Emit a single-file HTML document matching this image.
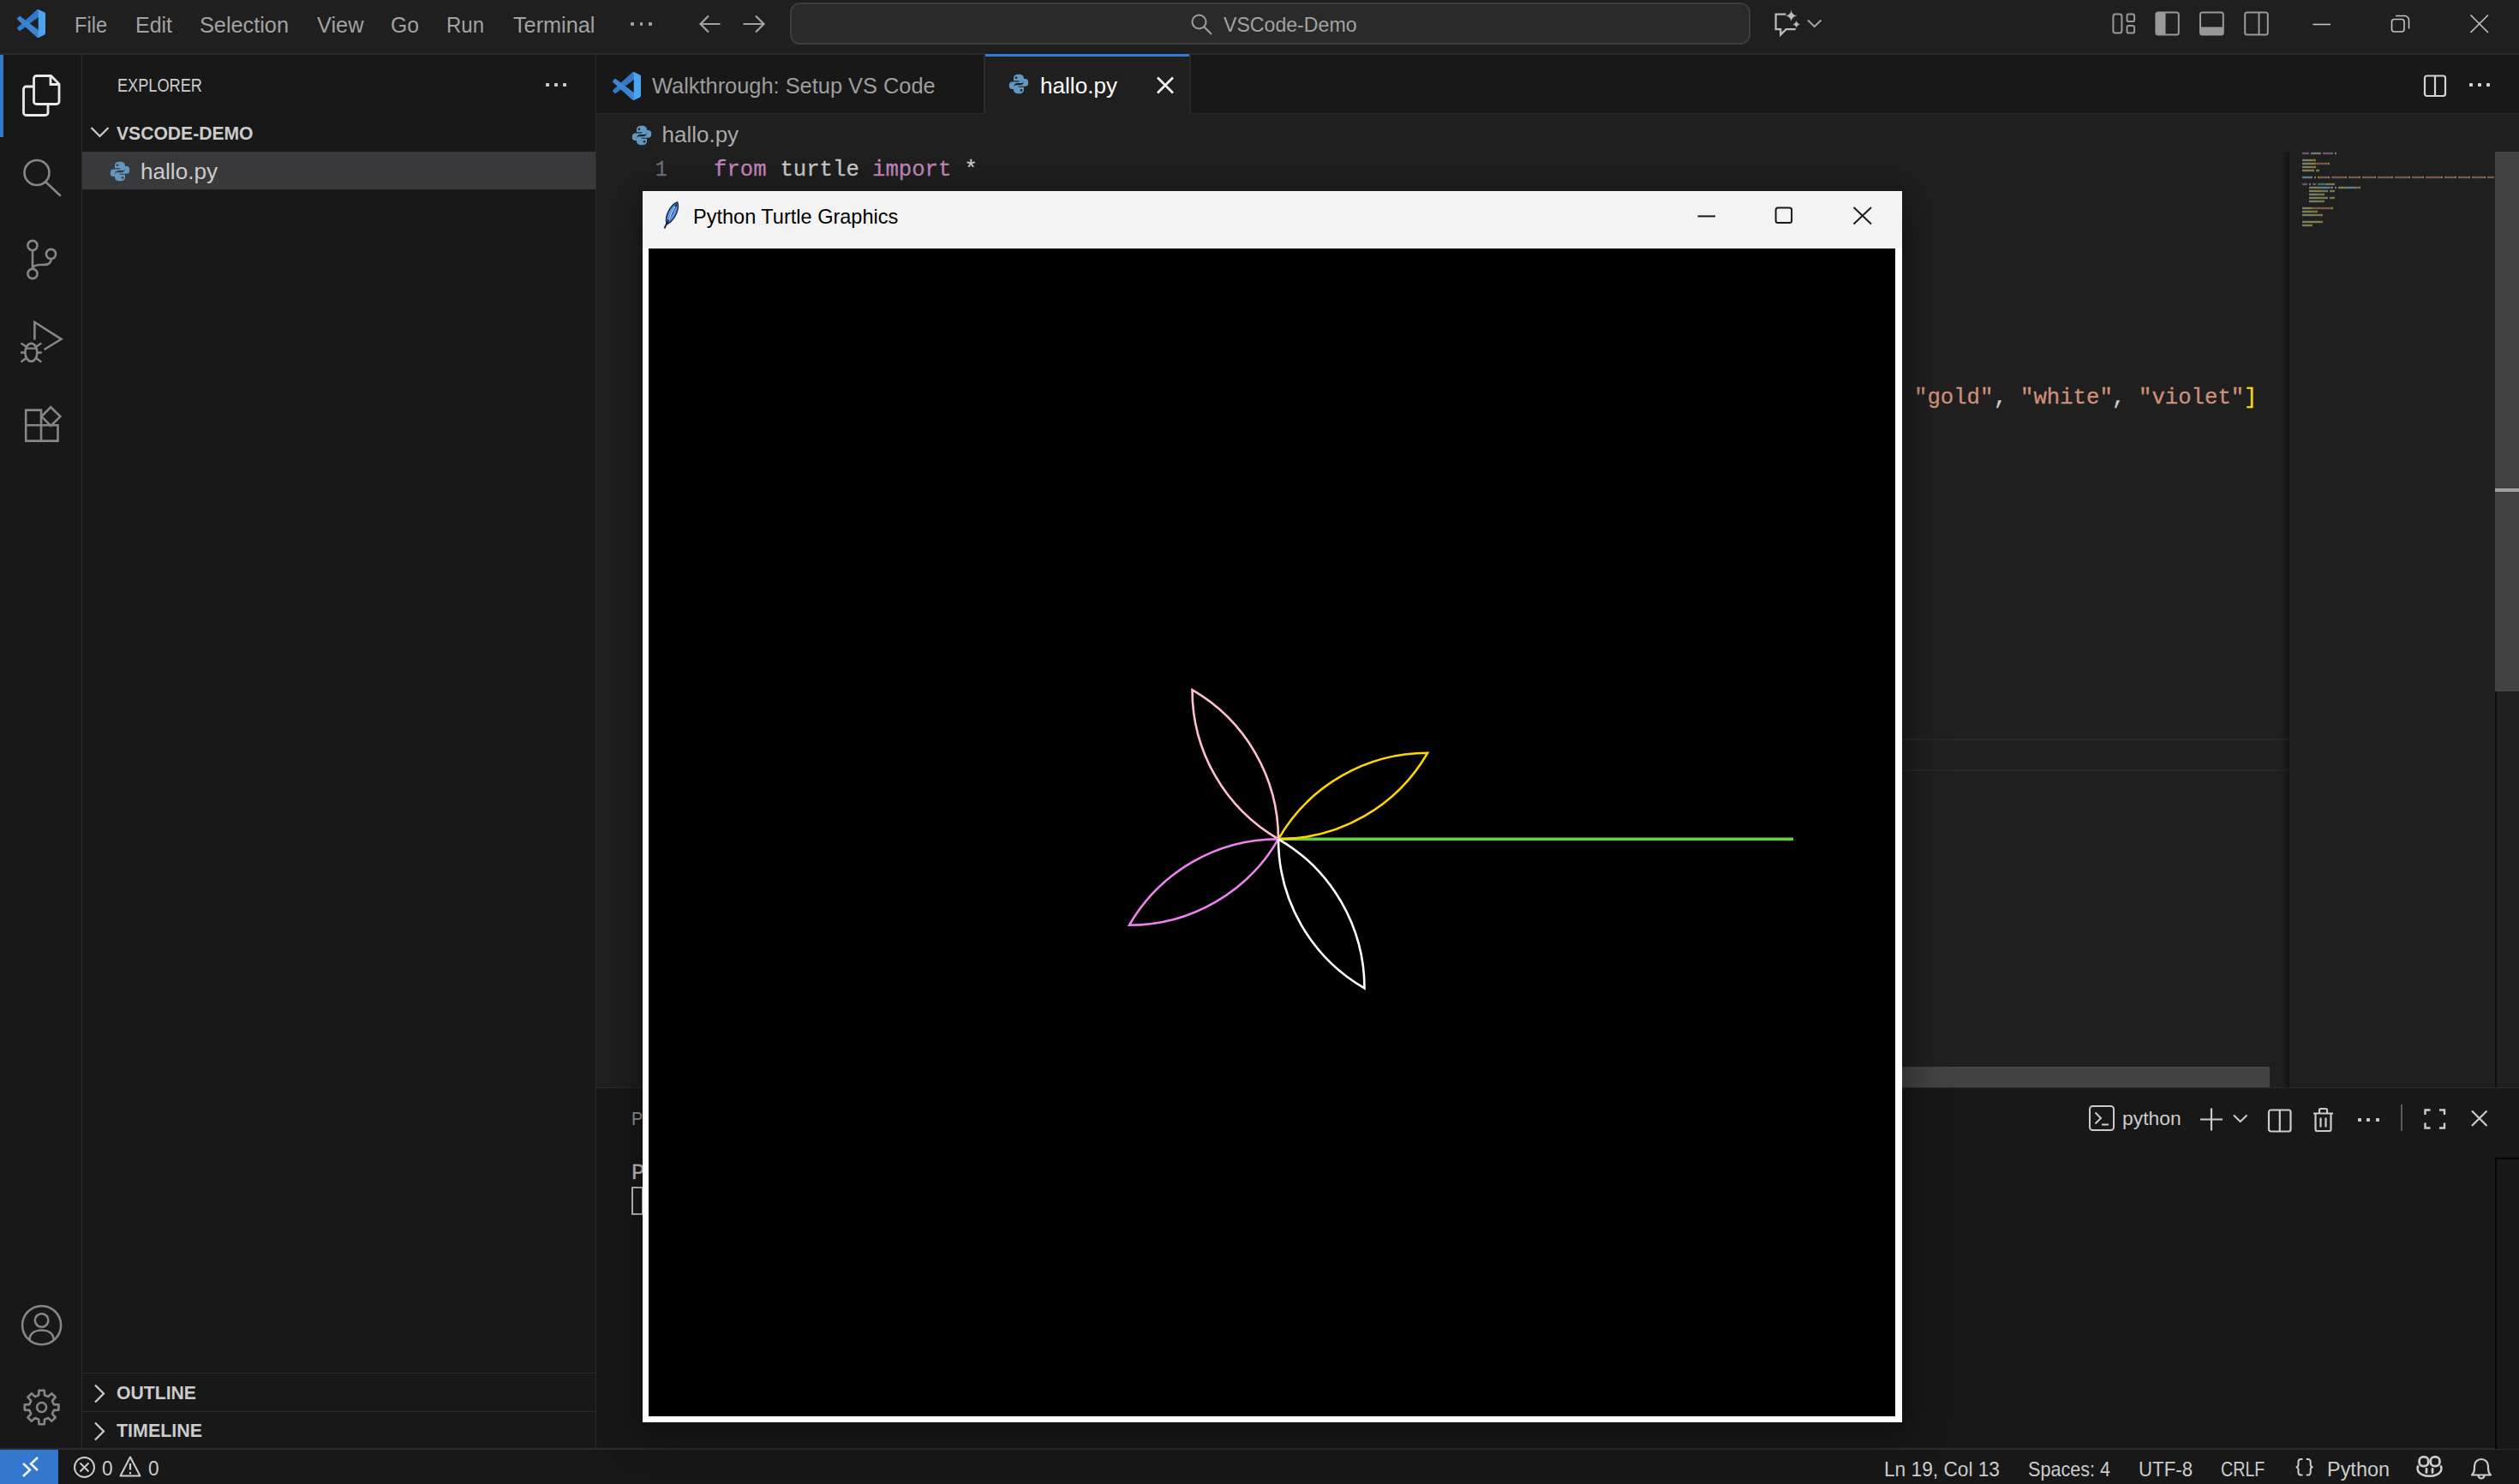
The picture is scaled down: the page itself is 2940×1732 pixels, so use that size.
<!DOCTYPE html>
<html lang="en"><head><meta charset="utf-8"><title>hallo.py - VSCode-Demo - Visual Studio Code</title>
<style>
html,body{margin:0;padding:0;background:#181818;}
body{width:2940px;height:1732px;position:relative;overflow:hidden;font-family:"Liberation Sans",sans-serif;}
.t{position:absolute;white-space:pre;line-height:1;transform-origin:0 50%;}
.s{font-family:"Liberation Sans",sans-serif;}
.m{font-family:"Liberation Mono",monospace;-webkit-text-stroke:0.3px currentColor;}
</style></head><body>
<div style="position:absolute;left:0px;top:0px;width:2940px;height:62px;background:#1f1f1f;"></div>
<div style="position:absolute;left:0px;top:63px;width:95px;height:1628px;background:#181818;"></div>
<div style="position:absolute;left:95px;top:63px;width:1px;height:1628px;background:#2b2b2b;"></div>
<div style="position:absolute;left:0px;top:64px;width:4px;height:96px;background:#3579c8;"></div>
<div style="position:absolute;left:96px;top:63px;width:599px;height:1628px;background:#181818;"></div>
<div style="position:absolute;left:695px;top:63px;width:1px;height:1628px;background:#2b2b2b;"></div>
<div style="position:absolute;left:696px;top:63px;width:2244px;height:69px;background:#181818;"></div>
<div style="position:absolute;left:0px;top:61.5px;width:2940px;height:2px;background:#2b2b2b;"></div>
<div style="position:absolute;left:696px;top:131.7px;width:2244px;height:1.6px;background:#2b2b2b;"></div>
<div style="position:absolute;left:1148px;top:63px;width:1.8px;height:70px;background:#2b2b2b;"></div>
<div style="position:absolute;left:1149.8px;top:61px;width:238.4px;height:72px;background:#1f1f1f;"></div>
<div style="position:absolute;left:1149.8px;top:63.3px;width:238.4px;height:2.4px;background:#2f7bd8;"></div>
<div style="position:absolute;left:1388.2px;top:63px;width:1.8px;height:70px;background:#2b2b2b;"></div>
<div style="position:absolute;left:696px;top:133px;width:2244px;height:1137px;background:#1f1f1f;"></div>
<div style="position:absolute;left:696px;top:1269px;width:2244px;height:1px;background:#2b2b2b;"></div>
<div style="position:absolute;left:696px;top:1270px;width:2244px;height:421px;background:#181818;"></div>
<div style="position:absolute;left:0px;top:1691px;width:2940px;height:41px;background:#181818;"></div>
<div style="position:absolute;left:0px;top:1690.3px;width:2940px;height:1.7px;background:#2b2b2b;"></div>
<div style="position:absolute;left:0px;top:1692px;width:68.4px;height:40px;background:#3477cf;"></div>
<div style="position:absolute;left:96px;top:177px;width:599px;height:44px;background:#39393b;"></div>
<div style="position:absolute;left:96px;top:1602px;width:599px;height:1px;background:#2b2b2b;"></div>
<div style="position:absolute;left:96px;top:1647px;width:599px;height:1px;background:#2b2b2b;"></div>
<div style="position:absolute;left:820px;top:862px;width:1851px;height:2px;background:#282828;"></div>
<div style="position:absolute;left:820px;top:898px;width:1851px;height:2px;background:#282828;"></div>
<div style="position:absolute;left:2911.5px;top:177px;width:2px;height:1092px;background:#0e0e12;"></div>
<div style="position:absolute;left:2911.5px;top:177px;width:28.5px;height:630px;background:#424242;"></div>
<div style="position:absolute;left:2911.5px;top:570px;width:28.5px;height:4px;background:#a0a0a0;"></div>
<div style="position:absolute;left:1500px;top:1245px;width:1149px;height:24px;background:#434343;"></div>
<div style="position:absolute;left:2661px;top:177px;width:10.5px;height:1093px;background:linear-gradient(90deg,rgba(0,0,0,0),rgba(0,0,0,0.35))"></div>
<svg style="position:absolute;left:20px;top:11px;" width="33" height="33" viewBox="0 0 100 100"><path d="M96.4614 10.7962L75.8569 0.875542C73.4719 -0.272773 70.6217 0.211611 68.75 2.08333L1.29858 63.5832C-0.515693 65.2373 -0.513607 68.0937 1.30308 69.7452L6.81272 74.7541C8.29793 76.1042 10.5347 76.2036 12.1338 74.9905L93.3609 13.3699C96.086 11.3026 100 13.2462 100 16.6667V16.4275C100 14.0265 98.6246 11.8378 96.4614 10.7962Z" fill="#3577c4"/><path d="M96.4614 89.2038L75.8569 99.1245C73.4719 100.273 70.6217 99.7884 68.75 97.9167L1.29858 36.4169C-0.515693 34.7627 -0.513607 31.9063 1.30308 30.2548L6.81272 25.2459C8.29793 23.8958 10.5347 23.7964 12.1338 25.0095L93.3609 86.6301C96.086 88.6974 100 86.7538 100 83.3334V83.5726C100 85.9735 98.6246 88.1622 96.4614 89.2038Z" fill="#3b84d4"/><path d="M75.8578 99.1263C73.4721 100.274 70.6219 99.7885 68.75 97.9166C71.0564 100.223 75 98.5895 75 95.3278V4.67213C75 1.41039 71.0564 -0.223106 68.75 2.08329C70.6219 0.211402 73.4721 -0.273666 75.8578 0.873633L96.4587 10.7807C98.6234 11.8217 100 14.0112 100 16.4132V83.5871C100 85.9891 98.6234 88.1786 96.4586 89.2196L75.8578 99.1263Z" fill="#4ca3f0"/></svg>
<svg style="position:absolute;left:715px;top:83.5px;" width="33" height="33" viewBox="0 0 100 100"><path d="M96.4614 10.7962L75.8569 0.875542C73.4719 -0.272773 70.6217 0.211611 68.75 2.08333L1.29858 63.5832C-0.515693 65.2373 -0.513607 68.0937 1.30308 69.7452L6.81272 74.7541C8.29793 76.1042 10.5347 76.2036 12.1338 74.9905L93.3609 13.3699C96.086 11.3026 100 13.2462 100 16.6667V16.4275C100 14.0265 98.6246 11.8378 96.4614 10.7962Z" fill="#3577c4"/><path d="M96.4614 89.2038L75.8569 99.1245C73.4719 100.273 70.6217 99.7884 68.75 97.9167L1.29858 36.4169C-0.515693 34.7627 -0.513607 31.9063 1.30308 30.2548L6.81272 25.2459C8.29793 23.8958 10.5347 23.7964 12.1338 25.0095L93.3609 86.6301C96.086 88.6974 100 86.7538 100 83.3334V83.5726C100 85.9735 98.6246 88.1622 96.4614 89.2038Z" fill="#3b84d4"/><path d="M75.8578 99.1263C73.4721 100.274 70.6219 99.7885 68.75 97.9166C71.0564 100.223 75 98.5895 75 95.3278V4.67213C75 1.41039 71.0564 -0.223106 68.75 2.08329C70.6219 0.211402 73.4721 -0.273666 75.8578 0.873633L96.4587 10.7807C98.6234 11.8217 100 14.0112 100 16.4132V83.5871C100 85.9891 98.6234 88.1786 96.4586 89.2196L75.8578 99.1263Z" fill="#4ca3f0"/></svg>
<svg style="position:absolute;left:128px;top:187.5px;" width="24" height="24" viewBox="0 0 32 32"><path d="M16 1C10 1 8 3.5 8 7V11H16.5V12.5H5.5C2.5 12.5 1 15 1 18.5C1 22 2.8 24 5.5 24H8.5V19.5C8.5 16.5 10.8 14.5 13.5 14.5H20C22.5 14.5 24 12.8 24 10.5V7C24 3.5 21.5 1 16 1Z" fill="#6197c1"/><circle cx="12" cy="6.2" r="1.7" fill="#39393b"/><g transform="rotate(180 16 16)"><path d="M16 1C10 1 8 3.5 8 7V11H16.5V12.5H5.5C2.5 12.5 1 15 1 18.5C1 22 2.8 24 5.5 24H8.5V19.5C8.5 16.5 10.8 14.5 13.5 14.5H20C22.5 14.5 24 12.8 24 10.5V7C24 3.5 21.5 1 16 1Z" fill="#6197c1"/><circle cx="12" cy="6.2" r="1.7" fill="#39393b"/></g></svg>
<svg style="position:absolute;left:1177px;top:85.5px;" width="24" height="24" viewBox="0 0 32 32"><path d="M16 1C10 1 8 3.5 8 7V11H16.5V12.5H5.5C2.5 12.5 1 15 1 18.5C1 22 2.8 24 5.5 24H8.5V19.5C8.5 16.5 10.8 14.5 13.5 14.5H20C22.5 14.5 24 12.8 24 10.5V7C24 3.5 21.5 1 16 1Z" fill="#6197c1"/><circle cx="12" cy="6.2" r="1.7" fill="#1f1f1f"/><g transform="rotate(180 16 16)"><path d="M16 1C10 1 8 3.5 8 7V11H16.5V12.5H5.5C2.5 12.5 1 15 1 18.5C1 22 2.8 24 5.5 24H8.5V19.5C8.5 16.5 10.8 14.5 13.5 14.5H20C22.5 14.5 24 12.8 24 10.5V7C24 3.5 21.5 1 16 1Z" fill="#6197c1"/><circle cx="12" cy="6.2" r="1.7" fill="#1f1f1f"/></g></svg>
<svg style="position:absolute;left:736.5px;top:145.5px;" width="24" height="24" viewBox="0 0 32 32"><path d="M16 1C10 1 8 3.5 8 7V11H16.5V12.5H5.5C2.5 12.5 1 15 1 18.5C1 22 2.8 24 5.5 24H8.5V19.5C8.5 16.5 10.8 14.5 13.5 14.5H20C22.5 14.5 24 12.8 24 10.5V7C24 3.5 21.5 1 16 1Z" fill="#6197c1"/><circle cx="12" cy="6.2" r="1.7" fill="#1f1f1f"/><g transform="rotate(180 16 16)"><path d="M16 1C10 1 8 3.5 8 7V11H16.5V12.5H5.5C2.5 12.5 1 15 1 18.5C1 22 2.8 24 5.5 24H8.5V19.5C8.5 16.5 10.8 14.5 13.5 14.5H20C22.5 14.5 24 12.8 24 10.5V7C24 3.5 21.5 1 16 1Z" fill="#6197c1"/><circle cx="12" cy="6.2" r="1.7" fill="#1f1f1f"/></g></svg>
<div style="position:absolute;left:736.3px;top:26.3px;width:3.4px;height:3.4px;background:#a2a2a2;border-radius:1px;"></div>
<div style="position:absolute;left:746.8px;top:26.3px;width:3.4px;height:3.4px;background:#a2a2a2;border-radius:1px;"></div>
<div style="position:absolute;left:757.3px;top:26.3px;width:3.4px;height:3.4px;background:#a2a2a2;border-radius:1px;"></div>
<svg style="position:absolute;left:812px;top:14px;" width="32" height="28" viewBox="0 0 32 28"><path d="M28.5 14H5.5M15 4.5L5.5 14L15 23.5" fill="none" stroke="#a2a2a2" stroke-width="2.2" /></svg>
<svg style="position:absolute;left:864px;top:14px;" width="32" height="28" viewBox="0 0 32 28"><path d="M3.5 14H27.5M18 4.5L27.5 14L18 23.5" fill="none" stroke="#a2a2a2" stroke-width="2.2" /></svg>
<div style="position:absolute;left:922px;top:3.3px;width:1117px;height:44.4px;background:#2a2a2a;border:2px solid #3d3d3d;border-radius:11.5px"></div>
<svg style="position:absolute;left:1388px;top:14px;" width="30" height="30" viewBox="0 0 30 30"><path d="M19.5 11.5a8 8 0 1 1-16 0a8 8 0 0 1 16 0ZM17.5 17.5L26 26" fill="none" stroke="#a2a2a2" stroke-width="2" /></svg>
<svg style="position:absolute;left:2066px;top:8px;" width="40" height="36" viewBox="0 0 40 36"><path d="M18.5 8.6H6.6V26.2H12.2V32.6L18.6 26.2H28.6V25" fill="none" stroke="#bdbdbd" stroke-width="2.2" stroke-linejoin="miter"/><path d="M24.6 2.6C25.7 8 27 9.3 32.4 10.4C27 11.5 25.7 12.8 24.6 18.2C23.5 12.8 22.2 11.5 16.8 10.4C22.2 9.3 23.5 8 24.6 2.6Z" fill="#bdbdbd" stroke="#1f1f1f" stroke-width="0.8"/><path d="M30.6 14.8C31.4 18.6 32.4 19.6 36.2 20.4C32.4 21.2 31.4 22.2 30.6 26C29.8 22.2 28.8 21.2 25 20.4C28.8 19.6 29.8 18.6 30.6 14.8Z" fill="#bdbdbd" stroke="#1f1f1f" stroke-width="0.8"/></svg>
<svg style="position:absolute;left:2106px;top:18px;" width="24" height="18" viewBox="0 0 24 18"><path d="M4 5.5L11.7 13L19.5 5.5" fill="none" stroke="#a2a2a2" stroke-width="2" /></svg>
<svg style="position:absolute;left:2462px;top:12px;" width="34" height="32" viewBox="0 0 34 32"><rect x="4.4" y="4.5" width="10" height="22" rx="2.5" fill="none" stroke="#999999" stroke-width="2"/><rect x="20.5" y="4.5" width="8.6" height="8.6" rx="2.2" fill="none" stroke="#999999" stroke-width="2"/><rect x="20.5" y="18" width="8.6" height="8.6" rx="2.2" fill="none" stroke="#999999" stroke-width="2"/></svg>
<svg style="position:absolute;left:2512px;top:10px;" width="36" height="36" viewBox="0 0 36 36"><rect x="4.4" y="4.5" width="26.4" height="26" rx="2.5" fill="none" stroke="#999999" stroke-width="2"/><path d="M4.4 6.5a2 2 0 0 1 2-2H15.5V30.5H6.4a2 2 0 0 1-2-2Z" fill="#999999"/></svg>
<svg style="position:absolute;left:2564px;top:10px;" width="36" height="36" viewBox="0 0 36 36"><rect x="4" y="4.5" width="26.8" height="26" rx="2.5" fill="none" stroke="#999999" stroke-width="2"/><path d="M4 21.5H30.8V28.5a2 2 0 0 1-2 2H6a2 2 0 0 1-2-2Z" fill="#999999"/></svg>
<svg style="position:absolute;left:2616px;top:10px;" width="36" height="36" viewBox="0 0 36 36"><rect x="4.2" y="4.5" width="26.6" height="26" rx="2.5" fill="none" stroke="#999999" stroke-width="2"/><path d="M20.5 4.5V30.5" stroke="#999999" stroke-width="2"/></svg>
<svg style="position:absolute;left:2696px;top:20px;" width="28" height="16" viewBox="0 0 28 16"><path d="M3.4 8.5H24" fill="none" stroke="#c4c4c4" stroke-width="1.6" /></svg>
<svg style="position:absolute;left:2786px;top:12px;" width="32" height="32" viewBox="0 0 32 32"><rect x="5.5" y="10.5" width="14.5" height="14.5" rx="3" fill="none" stroke="#c4c4c4" stroke-width="1.6"/><path d="M10 6.5H20.5a5 5 0 0 1 5 5V21.5" fill="none" stroke="#c4c4c4" stroke-width="1.6" /></svg>
<svg style="position:absolute;left:2878px;top:12px;" width="32" height="32" viewBox="0 0 32 32"><path d="M5.5 5.5L26 26M26 5.5L5.5 26" fill="none" stroke="#c4c4c4" stroke-width="1.6" /></svg>
<svg style="position:absolute;left:1344px;top:84px;" width="32" height="32" viewBox="0 0 32 32"><path d="M7 6.5L25 24.5M25 6.5L7 24.5" fill="none" stroke="#f0f0f0" stroke-width="2.7" /></svg>
<svg style="position:absolute;left:2824px;top:82px;" width="36" height="36" viewBox="0 0 36 36"><rect x="6" y="6.5" width="24" height="23.5" rx="2.5" fill="none" stroke="#d4d4d4" stroke-width="2.2"/><path d="M18 6.5V30" stroke="#d4d4d4" stroke-width="2.2"/></svg>
<div style="position:absolute;left:2881.5px;top:97.3px;width:4px;height:4px;background:#d4d4d4;border-radius:1px;"></div>
<div style="position:absolute;left:2891.7px;top:97.3px;width:4px;height:4px;background:#d4d4d4;border-radius:1px;"></div>
<div style="position:absolute;left:2901.7px;top:97.3px;width:4px;height:4px;background:#d4d4d4;border-radius:1px;"></div>
<svg style="position:absolute;left:20px;top:80px;" width="56" height="60" viewBox="20 80 56 60"><path d="M43 88.5H59.5L69 98V118.5a3 3 0 0 1-3 3H42.5a3 3 0 0 1-3-3V91.5a3 3 0 0 1 3-3Z" fill="none" stroke="#e8e8e8" stroke-width="2.8" /><path d="M59 89V98.5H68.5" fill="none" stroke="#e8e8e8" stroke-width="2.8" /><path d="M39.5 101H30.5a3 3 0 0 0-3 3V131.5a3 3 0 0 0 3 3H53a3 3 0 0 0 3-3V121.5" fill="none" stroke="#e8e8e8" stroke-width="2.8" /></svg>
<svg style="position:absolute;left:24px;top:182px;" width="50" height="50" viewBox="0 0 50 50"><path d="M33.5 19.5a14.5 14.5 0 1 1-29 0a14.5 14.5 0 0 1 29 0ZM29.5 30.5L46 46" fill="none" stroke="#868686" stroke-width="2.6" stroke-linecap="round"/></svg>
<svg style="position:absolute;left:24px;top:276px;" width="48" height="54" viewBox="0 0 48 54"><circle cx="14" cy="10.5" r="5.6" fill="none" stroke="#868686" stroke-width="2.6"/><circle cx="14" cy="43.5" r="5.6" fill="none" stroke="#868686" stroke-width="2.6"/><circle cx="35.5" cy="20.5" r="5.6" fill="none" stroke="#868686" stroke-width="2.6"/><path d="M14 16.5V37.5M35.5 26.5C35.5 33 30 33 24 33C18 33 14 34 14 38" fill="none" stroke="#868686" stroke-width="2.6" /></svg>
<svg style="position:absolute;left:18px;top:368px;" width="60" height="62" viewBox="18 368 60 62"><path d="M40.4 396.5V376L71.5 395.8L51.5 408" fill="none" stroke="#868686" stroke-width="2.6" stroke-linejoin="miter"/><ellipse cx="36.4" cy="411.3" rx="7" ry="10.4" fill="none" stroke="#868686" stroke-width="2.6"/><path d="M29.8 406.6H43M24 411.5H29M43.8 411.5H48.8M24.5 422.5L30.5 418M48.3 422.5L42.3 418M24.5 400.5L30.5 404.5M48.3 400.5L42.3 404.5" fill="none" stroke="#868686" stroke-width="2.4" /></svg>
<svg style="position:absolute;left:22px;top:466px;" width="56" height="56" viewBox="22 466 56 56"><path d="M30.2 478.6H48V514.6H30.2ZM30.2 496.2H67.5V514.6H48" fill="none" stroke="#868686" stroke-width="2.6" stroke-linejoin="miter"/><path d="M59.3 475.2L70.4 486.1L59.3 497L48.4 486.1Z" fill="none" stroke="#868686" stroke-width="2.6" stroke-linejoin="miter"/></svg>
<svg style="position:absolute;left:22px;top:1520px;" width="54" height="54" viewBox="0 0 54 54"><circle cx="26.6" cy="26.7" r="22.5" fill="none" stroke="#868686" stroke-width="2.6"/><circle cx="26.6" cy="21" r="7.8" fill="none" stroke="#868686" stroke-width="2.6"/><path d="M12.5 43.5C13 35 20 32.5 26.6 32.5C33 32.5 40 35 40.7 43.5" fill="none" stroke="#868686" stroke-width="2.6" /></svg>
<svg style="position:absolute;left:22px;top:1616px;" width="54" height="54" viewBox="0 0 54 54"><path d="M23.5 6.7L29.7 6.7L30.0 12.3L34.2 14.1L38.4 10.3L42.8 14.7L39.0 18.9L40.8 23.1L46.4 23.4L46.4 29.6L40.8 29.9L39.0 34.1L42.8 38.3L38.4 42.7L34.2 38.9L30.0 40.7L29.7 46.3L23.5 46.3L23.2 40.7L19.0 38.9L14.8 42.7L10.4 38.3L14.2 34.1L12.4 29.9L6.8 29.6L6.8 23.4L12.4 23.1L14.2 18.9L10.4 14.7L14.8 10.3L19.0 14.1L23.2 12.3Z" fill="none" stroke="#868686" stroke-width="2.6" stroke-linejoin="round"/><circle cx="26.6" cy="26.5" r="5.5" fill="none" stroke="#868686" stroke-width="2.6"/></svg>
<div style="position:absolute;left:636.5px;top:97.3px;width:4px;height:4px;background:#cccccc;border-radius:1px;"></div>
<div style="position:absolute;left:646.8px;top:97.3px;width:4px;height:4px;background:#cccccc;border-radius:1px;"></div>
<div style="position:absolute;left:657px;top:97.3px;width:4px;height:4px;background:#cccccc;border-radius:1px;"></div>
<svg style="position:absolute;left:102px;top:142px;" width="30" height="24" viewBox="0 0 30 24"><path d="M4.5 7L14.5 17L24.5 7" fill="none" stroke="#cccccc" stroke-width="2.2" /></svg>
<svg style="position:absolute;left:104px;top:1612px;" width="24" height="30" viewBox="0 0 24 30"><path d="M7 4.5L17 14.5L7 24.5" fill="none" stroke="#cccccc" stroke-width="2.2" /></svg>
<svg style="position:absolute;left:104px;top:1656px;" width="24" height="30" viewBox="0 0 24 30"><path d="M7 4.5L17 14.5L7 24.5" fill="none" stroke="#cccccc" stroke-width="2.2" /></svg>
<svg style="position:absolute;left:20px;top:1696px;" width="32" height="32" viewBox="0 0 32 32"><path d="M7 12L15 19.5L7 27M24 5L16 12.5L24 20" fill="none" stroke="#ffffff" stroke-width="2.4" /></svg>
<svg style="position:absolute;left:84px;top:1698px;" width="30" height="30" viewBox="0 0 30 30"><circle cx="14.5" cy="14.5" r="11.5" fill="none" stroke="#cccccc" stroke-width="2"/><path d="M9.5 9.5L19.5 19.5M19.5 9.5L9.5 19.5" fill="none" stroke="#cccccc" stroke-width="2" /></svg>
<svg style="position:absolute;left:138px;top:1697.3px;" width="30" height="30" viewBox="0 0 30 30"><path d="M14 3.5L25.5 25.5H2.5Z" fill="none" stroke="#cccccc" stroke-width="2" stroke-linejoin="round"/><path d="M14 11V18.5M14 21V23.5" fill="none" stroke="#cccccc" stroke-width="2.2" /></svg>
<svg style="position:absolute;left:2676px;top:1700px;" width="28" height="26" viewBox="2676 1700 28 26"><path d="M2687.5 1703h-2a3 3 0 0 0-3 3v3.5a2.8 2.8 0 0 1-2.8 2.8a2.8 2.8 0 0 1 2.8 2.8v3.5a3 3 0 0 0 3 3h2M2691.7 1703h2a3 3 0 0 1 3 3v3.5a2.8 2.8 0 0 0 2.8 2.8a2.8 2.8 0 0 0-2.8 2.8v3.5a3 3 0 0 1-3 3h-2" fill="none" stroke="#cccccc" stroke-width="2" /></svg>
<svg style="position:absolute;left:2816px;top:1696px;" width="40" height="32" viewBox="2816 1696 40 32"><path d="M2822.5 1710.5C2821.5 1712 2821.5 1715 2822.3 1717.3C2825 1721 2830 1722.8 2835.5 1722.8C2841 1722.8 2846 1721 2848.7 1717.3C2849.5 1715 2849.5 1712 2848.5 1710.5" fill="none" stroke="#cccccc" stroke-width="2.6" /><rect x="2823.6" y="1700.4" width="10.6" height="10.8" rx="4.6" fill="none" stroke="#cccccc" stroke-width="2.8"/><rect x="2836.8" y="1700.4" width="10.6" height="10.8" rx="4.6" fill="none" stroke="#cccccc" stroke-width="2.8"/><path d="M2832 1714.5V1718.5M2839 1714.5V1718.5" fill="none" stroke="#cccccc" stroke-width="2.8" stroke-linecap="round"/></svg>
<svg style="position:absolute;left:2880px;top:1698px;" width="32" height="32" viewBox="0 0 32 32"><path d="M5 23.5H27C25 21.5 24 20 24 16V13a8 8 0 0 0-16 0V16C8 20 7 21.5 5 23.5ZM12.5 24a3.5 3.5 0 0 0 7 0" fill="none" stroke="#cccccc" stroke-width="2.2" stroke-linejoin="round"/></svg>
<svg style="position:absolute;left:2436px;top:1288px;" width="34" height="34" viewBox="0 0 34 34"><rect x="3" y="3" width="28" height="28" rx="3.5" fill="none" stroke="#cccccc" stroke-width="2"/><path d="M9.5 10.5L16 17L9.5 23.5M17 24.5H25" fill="none" stroke="#cccccc" stroke-width="2" /></svg>
<svg style="position:absolute;left:2564px;top:1290px;" width="32" height="32" viewBox="0 0 32 32"><path d="M17 3.5V29.5M4 16.5H30" fill="none" stroke="#cccccc" stroke-width="2.2" /></svg>
<svg style="position:absolute;left:2603px;top:1296px;" width="24" height="18" viewBox="0 0 24 18"><path d="M4 5.5L11.7 13L19.5 5.5" fill="none" stroke="#cccccc" stroke-width="2" /></svg>
<svg style="position:absolute;left:2644px;top:1290.5px;" width="34" height="34" viewBox="0 0 34 34"><rect x="4" y="4.5" width="25.5" height="25" rx="2.5" fill="none" stroke="#cccccc" stroke-width="2.2"/><path d="M16.8 4.5V29.5" fill="none" stroke="#cccccc" stroke-width="2.2" /></svg>
<svg style="position:absolute;left:2696px;top:1290px;" width="32" height="34" viewBox="0 0 32 34"><path d="M4 9.5H27M11 9V5.5a1.5 1.5 0 0 1 1.5-1.5h6a1.5 1.5 0 0 1 1.5 1.5V9M6.5 10V28a2 2 0 0 0 2 2h14a2 2 0 0 0 2-2V10M12.5 14.5V25.5M18.5 14.5V25.5" fill="none" stroke="#cccccc" stroke-width="2.2" /></svg>
<div style="position:absolute;left:2751.5px;top:1304.8px;width:4px;height:4px;background:#cccccc;border-radius:1px;"></div>
<div style="position:absolute;left:2762px;top:1304.8px;width:4px;height:4px;background:#cccccc;border-radius:1px;"></div>
<div style="position:absolute;left:2772.5px;top:1304.8px;width:4px;height:4px;background:#cccccc;border-radius:1px;"></div>
<div style="position:absolute;left:2802px;top:1289px;width:2px;height:31px;background:#5a5a5a;"></div>
<svg style="position:absolute;left:2826px;top:1290px;" width="32" height="32" viewBox="0 0 32 32"><path d="M4.5 11V5.5H10.5M21 5.5H27V11M27 20.5V26.5H21M10.5 26.5H4.5V20.5" fill="none" stroke="#cccccc" stroke-width="2.4" /></svg>
<svg style="position:absolute;left:2878px;top:1290px;" width="32" height="32" viewBox="0 0 32 32"><path d="M7 6.5L24.5 24M24.5 6.5L7 24" fill="none" stroke="#cccccc" stroke-width="2.2" /></svg>
<div style="position:absolute;left:2911.6px;top:1350.8px;width:28.4px;height:340px;background:#181818;border-left:2.2px solid #05050a;border-top:2.2px solid #05050a;box-sizing:border-box"></div>
<div style="position:absolute;left:737px;top:1385px;width:14px;height:33px;border:2px solid #c8c8c8;box-sizing:border-box"></div>
<span class="t s" style="left:87px;top:16.0px;font-size:26px;color:#a2a2a2;transform:scaleX(0.9068);">File</span>
<span class="t s" style="left:157.5px;top:16.0px;font-size:26px;color:#a2a2a2;transform:scaleX(0.9596);">Edit</span>
<span class="t s" style="left:233px;top:16.0px;font-size:26px;color:#a2a2a2;transform:scaleX(0.9722);">Selection</span>
<span class="t s" style="left:369.5px;top:16.0px;font-size:26px;color:#a2a2a2;transform:scaleX(0.9751);">View</span>
<span class="t s" style="left:456px;top:16.0px;font-size:26px;color:#a2a2a2;transform:scaleX(0.9514);">Go</span>
<span class="t s" style="left:521px;top:16.0px;font-size:26px;color:#a2a2a2;transform:scaleX(0.9224);">Run</span>
<span class="t s" style="left:598.6px;top:16.0px;font-size:26px;color:#a2a2a2;transform:scaleX(0.9710);">Terminal</span>
<span class="t s" style="left:1427.5px;top:17.2px;font-size:24px;color:#a2a2a2;transform:scaleX(0.9634);">VSCode-Demo</span>
<span class="t s" style="left:137px;top:89.4px;font-size:22px;color:#cccccc;transform:scaleX(0.8262);">EXPLORER</span>
<span class="t s" style="left:136px;top:144.9px;font-size:22px;color:#cccccc;font-weight:700;transform:scaleX(0.9594);">VSCODE-DEMO</span>
<span class="t s" style="left:164px;top:186.7px;font-size:26px;color:#cccccc;transform:scaleX(1.0042);">hallo.py</span>
<span class="t s" style="left:136px;top:1615.4px;font-size:22px;color:#cccccc;font-weight:700;transform:scaleX(0.9631);">OUTLINE</span>
<span class="t s" style="left:136px;top:1659.4px;font-size:22px;color:#cccccc;font-weight:700;transform:scaleX(0.9740);">TIMELINE</span>
<span class="t s" style="left:761px;top:87.0px;font-size:26px;color:#9d9d9d;transform:scaleX(0.9764);">Walkthrough: Setup VS Code</span>
<span class="t s" style="left:1214px;top:87.0px;font-size:26px;color:#ffffff;transform:scaleX(1.0042);">hallo.py</span>
<span class="t s" style="left:772.5px;top:144.0px;font-size:26px;color:#a9a9a9;">hallo.py</span>
<span class="t m" style="left:765.0px;top:185.1px;font-size:26px;color:#6e7681;transform:scaleX(0.8649);">1</span>
<span class="t m" style="left:765.0px;top:223.1px;font-size:26px;color:#6e7681;transform:scaleX(0.8649);">2</span>
<span class="t m" style="left:765.0px;top:261.1px;font-size:26px;color:#6e7681;transform:scaleX(0.8649);">3</span>
<span class="t m" style="left:765.0px;top:299.1px;font-size:26px;color:#6e7681;transform:scaleX(0.8649);">4</span>
<span class="t m" style="left:765.0px;top:337.1px;font-size:26px;color:#6e7681;transform:scaleX(0.8649);">5</span>
<span class="t m" style="left:765.0px;top:375.1px;font-size:26px;color:#6e7681;transform:scaleX(0.8649);">6</span>
<span class="t m" style="left:765.0px;top:413.1px;font-size:26px;color:#6e7681;transform:scaleX(0.8649);">7</span>
<span class="t m" style="left:765.0px;top:451.1px;font-size:26px;color:#6e7681;transform:scaleX(0.8649);">8</span>
<span class="t m" style="left:765.0px;top:489.1px;font-size:26px;color:#6e7681;transform:scaleX(0.8649);">9</span>
<span class="t m" style="left:751.5px;top:527.1px;font-size:26px;color:#6e7681;transform:scaleX(0.8649);">10</span>
<span class="t m" style="left:751.5px;top:565.1px;font-size:26px;color:#6e7681;transform:scaleX(0.8649);">11</span>
<span class="t m" style="left:751.5px;top:603.1px;font-size:26px;color:#6e7681;transform:scaleX(0.8649);">12</span>
<span class="t m" style="left:751.5px;top:641.1px;font-size:26px;color:#6e7681;transform:scaleX(0.8649);">13</span>
<span class="t m" style="left:751.5px;top:679.1px;font-size:26px;color:#6e7681;transform:scaleX(0.8649);">14</span>
<span class="t m" style="left:751.5px;top:717.1px;font-size:26px;color:#6e7681;transform:scaleX(0.8649);">15</span>
<span class="t m" style="left:751.5px;top:755.1px;font-size:26px;color:#6e7681;transform:scaleX(0.8649);">16</span>
<span class="t m" style="left:751.5px;top:793.1px;font-size:26px;color:#6e7681;transform:scaleX(0.8649);">17</span>
<span class="t m" style="left:751.5px;top:831.1px;font-size:26px;color:#6e7681;transform:scaleX(0.8649);">18</span>
<span class="t m" style="left:751.5px;top:869.1px;font-size:26px;color:#cccccc;transform:scaleX(0.8649);">19</span>
<span class="t m" style="left:751.5px;top:907.1px;font-size:26px;color:#6e7681;transform:scaleX(0.8649);">20</span>
<span class="t m" style="left:751.5px;top:945.1px;font-size:26px;color:#6e7681;transform:scaleX(0.8649);">21</span>
<span class="t m" style="left:751.5px;top:983.1px;font-size:26px;color:#6e7681;transform:scaleX(0.8649);">22</span>
<span class="t m" style="left:833.0px;top:185.1px;font-size:26px;color:#c586c0;transform:scaleX(0.9868);">from</span>
<span class="t m" style="left:894.6px;top:185.1px;font-size:26px;color:#cccccc;transform:scaleX(0.9870);"> turtle </span>
<span class="t m" style="left:1017.8px;top:185.1px;font-size:26px;color:#c586c0;transform:scaleX(0.9869);">import</span>
<span class="t m" style="left:1110.2px;top:185.1px;font-size:26px;color:#cccccc;transform:scaleX(0.9866);"> *</span>
<span class="t m" style="left:833.0px;top:261.1px;font-size:26px;color:#dcdcaa;transform:scaleX(0.9870);">speed</span>
<span class="t m" style="left:910.0px;top:261.1px;font-size:26px;color:#ffd700;transform:scaleX(0.9866);">(</span>
<span class="t m" style="left:925.4px;top:261.1px;font-size:26px;color:#b5cea8;transform:scaleX(0.9866);">0</span>
<span class="t m" style="left:940.8px;top:261.1px;font-size:26px;color:#ffd700;transform:scaleX(0.9866);">)</span>
<span class="t m" style="left:833.0px;top:299.1px;font-size:26px;color:#dcdcaa;transform:scaleX(0.9870);">bgcolor</span>
<span class="t m" style="left:940.8px;top:299.1px;font-size:26px;color:#ffd700;transform:scaleX(0.9866);">(</span>
<span class="t m" style="left:956.2px;top:299.1px;font-size:26px;color:#ce9178;transform:scaleX(0.9870);">&quot;black&quot;</span>
<span class="t m" style="left:1064.0px;top:299.1px;font-size:26px;color:#ffd700;transform:scaleX(0.9866);">)</span>
<span class="t m" style="left:833.0px;top:337.1px;font-size:26px;color:#dcdcaa;transform:scaleX(0.9870);">width</span>
<span class="t m" style="left:910.0px;top:337.1px;font-size:26px;color:#ffd700;transform:scaleX(0.9866);">(</span>
<span class="t m" style="left:925.4px;top:337.1px;font-size:26px;color:#b5cea8;transform:scaleX(0.9866);">2</span>
<span class="t m" style="left:940.8px;top:337.1px;font-size:26px;color:#ffd700;transform:scaleX(0.9866);">)</span>
<span class="t m" style="left:833.0px;top:375.1px;font-size:26px;color:#dcdcaa;transform:scaleX(0.9868);">goto</span>
<span class="t m" style="left:894.6px;top:375.1px;font-size:26px;color:#ffd700;transform:scaleX(0.9866);">(</span>
<span class="t m" style="left:910.0px;top:375.1px;font-size:26px;color:#b5cea8;transform:scaleX(0.9866);">0</span>
<span class="t m" style="left:925.4px;top:375.1px;font-size:26px;color:#cccccc;transform:scaleX(0.9866);">, </span>
<span class="t m" style="left:956.2px;top:375.1px;font-size:26px;color:#b5cea8;transform:scaleX(0.9866);">0</span>
<span class="t m" style="left:971.6px;top:375.1px;font-size:26px;color:#ffd700;transform:scaleX(0.9866);">)</span>
<span class="t m" style="left:833.0px;top:451.1px;font-size:26px;color:#9cdcfe;transform:scaleX(0.9869);">colors</span>
<span class="t m" style="left:925.4px;top:451.1px;font-size:26px;color:#cccccc;transform:scaleX(0.9869);"> = </span>
<span class="t m" style="left:971.6px;top:451.1px;font-size:26px;color:#ffd700;transform:scaleX(0.9866);">[</span>
<span class="t m" style="left:987.0px;top:451.1px;font-size:26px;color:#ce9178;transform:scaleX(0.9870);">&quot;red&quot;</span>
<span class="t m" style="left:1064.0px;top:451.1px;font-size:26px;color:#cccccc;transform:scaleX(0.9866);">, </span>
<span class="t m" style="left:1094.8px;top:451.1px;font-size:26px;color:#ce9178;transform:scaleX(0.9870);">&quot;purple&quot;</span>
<span class="t m" style="left:1218.0px;top:451.1px;font-size:26px;color:#cccccc;transform:scaleX(0.9866);">, </span>
<span class="t m" style="left:1248.8px;top:451.1px;font-size:26px;color:#ce9178;transform:scaleX(0.9869);">&quot;blue&quot;</span>
<span class="t m" style="left:1341.2px;top:451.1px;font-size:26px;color:#cccccc;transform:scaleX(0.9866);">, </span>
<span class="t m" style="left:1372.0px;top:451.1px;font-size:26px;color:#ce9178;transform:scaleX(0.9870);">&quot;green&quot;</span>
<span class="t m" style="left:1479.8000000000002px;top:451.1px;font-size:26px;color:#cccccc;transform:scaleX(0.9866);">, </span>
<span class="t m" style="left:1510.6px;top:451.1px;font-size:26px;color:#ce9178;transform:scaleX(0.9870);">&quot;orange&quot;</span>
<span class="t m" style="left:1633.8000000000002px;top:451.1px;font-size:26px;color:#cccccc;transform:scaleX(0.9866);">, </span>
<span class="t m" style="left:1664.6px;top:451.1px;font-size:26px;color:#ce9178;transform:scaleX(0.9870);">&quot;yellow&quot;</span>
<span class="t m" style="left:1787.8000000000002px;top:451.1px;font-size:26px;color:#cccccc;transform:scaleX(0.9866);">, </span>
<span class="t m" style="left:1818.6px;top:451.1px;font-size:26px;color:#ce9178;transform:scaleX(0.9869);">&quot;cyan&quot;</span>
<span class="t m" style="left:1911.0px;top:451.1px;font-size:26px;color:#cccccc;transform:scaleX(0.9866);">, </span>
<span class="t m" style="left:1941.8px;top:451.1px;font-size:26px;color:#ce9178;transform:scaleX(0.9869);">&quot;magenta&quot;</span>
<span class="t m" style="left:2080.4px;top:451.1px;font-size:26px;color:#cccccc;transform:scaleX(0.9866);">, </span>
<span class="t m" style="left:2111.2px;top:451.1px;font-size:26px;color:#ce9178;transform:scaleX(0.9869);">&quot;pink&quot;</span>
<span class="t m" style="left:2203.6000000000004px;top:451.1px;font-size:26px;color:#cccccc;transform:scaleX(0.9866);">, </span>
<span class="t m" style="left:2234.4px;top:451.1px;font-size:26px;color:#ce9178;transform:scaleX(0.9869);">&quot;gold&quot;</span>
<span class="t m" style="left:2326.8px;top:451.1px;font-size:26px;color:#cccccc;transform:scaleX(0.9866);">, </span>
<span class="t m" style="left:2357.6000000000004px;top:451.1px;font-size:26px;color:#ce9178;transform:scaleX(0.9870);">&quot;white&quot;</span>
<span class="t m" style="left:2465.4px;top:451.1px;font-size:26px;color:#cccccc;transform:scaleX(0.9866);">, </span>
<span class="t m" style="left:2496.2px;top:451.1px;font-size:26px;color:#ce9178;transform:scaleX(0.9870);">&quot;violet&quot;</span>
<span class="t m" style="left:2619.4px;top:451.1px;font-size:26px;color:#ffd700;transform:scaleX(0.9866);">]</span>
<span class="t m" style="left:833.0px;top:527.1px;font-size:26px;color:#c586c0;transform:scaleX(0.9869);">for</span>
<span class="t m" style="left:879.2px;top:527.1px;font-size:26px;color:#9cdcfe;transform:scaleX(0.9869);"> i </span>
<span class="t m" style="left:925.4px;top:527.1px;font-size:26px;color:#c586c0;transform:scaleX(0.9866);">in</span>
<span class="t m" style="left:971.6px;top:527.1px;font-size:26px;color:#4ec9b0;transform:scaleX(0.9870);">range</span>
<span class="t m" style="left:1048.6px;top:527.1px;font-size:26px;color:#ffd700;transform:scaleX(0.9866);">(</span>
<span class="t m" style="left:1064.0px;top:527.1px;font-size:26px;color:#b5cea8;transform:scaleX(0.9866);">36</span>
<span class="t m" style="left:1094.8px;top:527.1px;font-size:26px;color:#ffd700;transform:scaleX(0.9866);">)</span>
<span class="t m" style="left:1110.2px;top:527.1px;font-size:26px;color:#cccccc;transform:scaleX(0.9866);">:</span>
<span class="t m" style="left:894.6px;top:565.1px;font-size:26px;color:#dcdcaa;transform:scaleX(0.9870);">color</span>
<span class="t m" style="left:971.6px;top:565.1px;font-size:26px;color:#ffd700;transform:scaleX(0.9866);">(</span>
<span class="t m" style="left:987.0px;top:565.1px;font-size:26px;color:#9cdcfe;transform:scaleX(0.9869);">colors</span>
<span class="t m" style="left:1079.4px;top:565.1px;font-size:26px;color:#c586c0;transform:scaleX(0.9866);">[</span>
<span class="t m" style="left:1094.8px;top:565.1px;font-size:26px;color:#9cdcfe;transform:scaleX(0.9866);">i</span>
<span class="t m" style="left:1110.2px;top:565.1px;font-size:26px;color:#cccccc;transform:scaleX(0.9869);"> % </span>
<span class="t m" style="left:1156.4px;top:565.1px;font-size:26px;color:#dcdcaa;transform:scaleX(0.9869);">len</span>
<span class="t m" style="left:1202.6px;top:565.1px;font-size:26px;color:#ffd700;transform:scaleX(0.9866);">(</span>
<span class="t m" style="left:1218.0px;top:565.1px;font-size:26px;color:#9cdcfe;transform:scaleX(0.9869);">colors</span>
<span class="t m" style="left:1310.4px;top:565.1px;font-size:26px;color:#ffd700;transform:scaleX(0.9866);">)</span>
<span class="t m" style="left:1325.8px;top:565.1px;font-size:26px;color:#c586c0;transform:scaleX(0.9866);">]</span>
<span class="t m" style="left:1341.2px;top:565.1px;font-size:26px;color:#ffd700;transform:scaleX(0.9866);">)</span>
<span class="t m" style="left:894.6px;top:603.1px;font-size:26px;color:#dcdcaa;transform:scaleX(0.9869);">circle</span>
<span class="t m" style="left:987.0px;top:603.1px;font-size:26px;color:#ffd700;transform:scaleX(0.9866);">(</span>
<span class="t m" style="left:1002.4px;top:603.1px;font-size:26px;color:#b5cea8;transform:scaleX(0.9869);">100</span>
<span class="t m" style="left:1048.6px;top:603.1px;font-size:26px;color:#cccccc;transform:scaleX(0.9866);">, </span>
<span class="t m" style="left:1079.4px;top:603.1px;font-size:26px;color:#b5cea8;transform:scaleX(0.9866);">60</span>
<span class="t m" style="left:1110.2px;top:603.1px;font-size:26px;color:#ffd700;transform:scaleX(0.9866);">)</span>
<span class="t m" style="left:894.6px;top:641.1px;font-size:26px;color:#dcdcaa;transform:scaleX(0.9868);">left</span>
<span class="t m" style="left:956.2px;top:641.1px;font-size:26px;color:#ffd700;transform:scaleX(0.9866);">(</span>
<span class="t m" style="left:971.6px;top:641.1px;font-size:26px;color:#b5cea8;transform:scaleX(0.9869);">120</span>
<span class="t m" style="left:1017.8px;top:641.1px;font-size:26px;color:#ffd700;transform:scaleX(0.9866);">)</span>
<span class="t m" style="left:894.6px;top:679.1px;font-size:26px;color:#dcdcaa;transform:scaleX(0.9869);">circle</span>
<span class="t m" style="left:987.0px;top:679.1px;font-size:26px;color:#ffd700;transform:scaleX(0.9866);">(</span>
<span class="t m" style="left:1002.4px;top:679.1px;font-size:26px;color:#b5cea8;transform:scaleX(0.9869);">100</span>
<span class="t m" style="left:1048.6px;top:679.1px;font-size:26px;color:#cccccc;transform:scaleX(0.9866);">, </span>
<span class="t m" style="left:1079.4px;top:679.1px;font-size:26px;color:#b5cea8;transform:scaleX(0.9866);">60</span>
<span class="t m" style="left:1110.2px;top:679.1px;font-size:26px;color:#ffd700;transform:scaleX(0.9866);">)</span>
<span class="t m" style="left:894.6px;top:717.1px;font-size:26px;color:#dcdcaa;transform:scaleX(0.9868);">left</span>
<span class="t m" style="left:956.2px;top:717.1px;font-size:26px;color:#ffd700;transform:scaleX(0.9866);">(</span>
<span class="t m" style="left:971.6px;top:717.1px;font-size:26px;color:#b5cea8;transform:scaleX(0.9869);">210</span>
<span class="t m" style="left:1017.8px;top:717.1px;font-size:26px;color:#ffd700;transform:scaleX(0.9866);">)</span>
<span class="t m" style="left:833.0px;top:793.1px;font-size:26px;color:#dcdcaa;transform:scaleX(0.9870);">color</span>
<span class="t m" style="left:910.0px;top:793.1px;font-size:26px;color:#ffd700;transform:scaleX(0.9866);">(</span>
<span class="t m" style="left:925.4px;top:793.1px;font-size:26px;color:#ce9178;transform:scaleX(0.9869);">&quot;limegreen&quot;</span>
<span class="t m" style="left:1094.8px;top:793.1px;font-size:26px;color:#ffd700;transform:scaleX(0.9866);">)</span>
<span class="t m" style="left:833.0px;top:831.1px;font-size:26px;color:#dcdcaa;transform:scaleX(0.9870);">right</span>
<span class="t m" style="left:910.0px;top:831.1px;font-size:26px;color:#ffd700;transform:scaleX(0.9866);">(</span>
<span class="t m" style="left:925.4px;top:831.1px;font-size:26px;color:#b5cea8;transform:scaleX(0.9866);">90</span>
<span class="t m" style="left:956.2px;top:831.1px;font-size:26px;color:#ffd700;transform:scaleX(0.9866);">)</span>
<span class="t m" style="left:833.0px;top:869.1px;font-size:26px;color:#dcdcaa;transform:scaleX(0.9870);">forward</span>
<span class="t m" style="left:940.8px;top:869.1px;font-size:26px;color:#ffd700;transform:scaleX(0.9866);">(</span>
<span class="t m" style="left:956.2px;top:869.1px;font-size:26px;color:#b5cea8;transform:scaleX(0.9869);">300</span>
<span class="t m" style="left:1002.4px;top:869.1px;font-size:26px;color:#ffd700;transform:scaleX(0.9866);">)</span>
<span class="t m" style="left:833.0px;top:945.1px;font-size:26px;color:#dcdcaa;transform:scaleX(0.9870);">hideturtle</span>
<span class="t m" style="left:987.0px;top:945.1px;font-size:26px;color:#ffd700;transform:scaleX(0.9866);">(</span>
<span class="t m" style="left:1002.4px;top:945.1px;font-size:26px;color:#ffd700;transform:scaleX(0.9866);">)</span>
<span class="t m" style="left:833.0px;top:983.1px;font-size:26px;color:#dcdcaa;transform:scaleX(0.9868);">done</span>
<span class="t m" style="left:894.6px;top:983.1px;font-size:26px;color:#ffd700;transform:scaleX(0.9866);">(</span>
<span class="t m" style="left:910.0px;top:983.1px;font-size:26px;color:#ffd700;transform:scaleX(0.9866);">)</span>
<span class="t s" style="left:119.4px;top:1702.2px;font-size:24px;color:#cccccc;transform:scaleX(0.9432);">0</span>
<span class="t s" style="left:172.8px;top:1702.2px;font-size:24px;color:#cccccc;transform:scaleX(0.9432);">0</span>
<span class="t s" style="left:2198.7px;top:1702.7px;font-size:24px;color:#cccccc;transform:scaleX(0.9455);">Ln 19, Col 13</span>
<span class="t s" style="left:2367px;top:1702.7px;font-size:24px;color:#cccccc;transform:scaleX(0.8994);">Spaces: 4</span>
<span class="t s" style="left:2496px;top:1702.7px;font-size:24px;color:#cccccc;transform:scaleX(0.9265);">UTF-8</span>
<span class="t s" style="left:2591.6px;top:1702.7px;font-size:24px;color:#cccccc;transform:scaleX(0.8201);">CRLF</span>
<span class="t s" style="left:2716px;top:1702.7px;font-size:24px;color:#cccccc;transform:scaleX(0.9770);">Python</span>
<span class="t s" style="left:2477px;top:1295.2px;font-size:22px;color:#cccccc;transform:scaleX(1.0384);">python</span>
<span class="t s" style="left:737px;top:1295.4px;font-size:22px;color:#9d9d9d;transform:scaleX(0.8997);">PROBLEMS</span>
<span class="t m" style="left:737px;top:1356.1px;font-size:26px;color:#cccccc;letter-spacing:-0.2px;">PS C:\Users\demo\VSCode-Demo&gt;</span>
<svg style="position:absolute;left:2672px;top:177px;" width="240" height="100" viewBox="2672 177 240 100"><g opacity="0.5"><rect x="2687.0" y="177.8" width="8.0" height="2.4" fill="#c586c0"/><rect x="2697.0" y="177.8" width="12.0" height="2.4" fill="#cccccc"/><rect x="2711.0" y="177.8" width="12.0" height="2.4" fill="#c586c0"/><rect x="2725.0" y="177.8" width="2.0" height="2.4" fill="#cccccc"/><rect x="2687.0" y="185.8" width="10.0" height="2.4" fill="#dcdcaa"/><rect x="2697.0" y="185.8" width="2.0" height="2.4" fill="#ffd700"/><rect x="2699.0" y="185.8" width="2.0" height="2.4" fill="#b5cea8"/><rect x="2701.0" y="185.8" width="2.0" height="2.4" fill="#ffd700"/><rect x="2687.0" y="189.8" width="14.0" height="2.4" fill="#dcdcaa"/><rect x="2701.0" y="189.8" width="2.0" height="2.4" fill="#ffd700"/><rect x="2703.0" y="189.8" width="14.0" height="2.4" fill="#ce9178"/><rect x="2717.0" y="189.8" width="2.0" height="2.4" fill="#ffd700"/><rect x="2687.0" y="193.8" width="10.0" height="2.4" fill="#dcdcaa"/><rect x="2697.0" y="193.8" width="2.0" height="2.4" fill="#ffd700"/><rect x="2699.0" y="193.8" width="2.0" height="2.4" fill="#b5cea8"/><rect x="2701.0" y="193.8" width="2.0" height="2.4" fill="#ffd700"/><rect x="2687.0" y="197.8" width="8.0" height="2.4" fill="#dcdcaa"/><rect x="2695.0" y="197.8" width="2.0" height="2.4" fill="#ffd700"/><rect x="2697.0" y="197.8" width="2.0" height="2.4" fill="#b5cea8"/><rect x="2699.0" y="197.8" width="2.0" height="2.4" fill="#cccccc"/><rect x="2703.0" y="197.8" width="2.0" height="2.4" fill="#b5cea8"/><rect x="2705.0" y="197.8" width="2.0" height="2.4" fill="#ffd700"/><rect x="2687.0" y="205.8" width="12.0" height="2.4" fill="#9cdcfe"/><rect x="2701.0" y="205.8" width="2.0" height="2.4" fill="#cccccc"/><rect x="2705.0" y="205.8" width="2.0" height="2.4" fill="#ffd700"/><rect x="2707.0" y="205.8" width="10.0" height="2.4" fill="#ce9178"/><rect x="2717.0" y="205.8" width="2.0" height="2.4" fill="#cccccc"/><rect x="2721.0" y="205.8" width="16.0" height="2.4" fill="#ce9178"/><rect x="2737.0" y="205.8" width="2.0" height="2.4" fill="#cccccc"/><rect x="2741.0" y="205.8" width="12.0" height="2.4" fill="#ce9178"/><rect x="2753.0" y="205.8" width="2.0" height="2.4" fill="#cccccc"/><rect x="2757.0" y="205.8" width="14.0" height="2.4" fill="#ce9178"/><rect x="2771.0" y="205.8" width="2.0" height="2.4" fill="#cccccc"/><rect x="2775.0" y="205.8" width="16.0" height="2.4" fill="#ce9178"/><rect x="2791.0" y="205.8" width="2.0" height="2.4" fill="#cccccc"/><rect x="2795.0" y="205.8" width="16.0" height="2.4" fill="#ce9178"/><rect x="2811.0" y="205.8" width="2.0" height="2.4" fill="#cccccc"/><rect x="2815.0" y="205.8" width="12.0" height="2.4" fill="#ce9178"/><rect x="2827.0" y="205.8" width="2.0" height="2.4" fill="#cccccc"/><rect x="2831.0" y="205.8" width="18.0" height="2.4" fill="#ce9178"/><rect x="2849.0" y="205.8" width="2.0" height="2.4" fill="#cccccc"/><rect x="2853.0" y="205.8" width="12.0" height="2.4" fill="#ce9178"/><rect x="2865.0" y="205.8" width="2.0" height="2.4" fill="#cccccc"/><rect x="2869.0" y="205.8" width="12.0" height="2.4" fill="#ce9178"/><rect x="2881.0" y="205.8" width="2.0" height="2.4" fill="#cccccc"/><rect x="2885.0" y="205.8" width="14.0" height="2.4" fill="#ce9178"/><rect x="2899.0" y="205.8" width="2.0" height="2.4" fill="#cccccc"/><rect x="2903.0" y="205.8" width="8.0" height="2.4" fill="#ce9178"/><rect x="2687.0" y="213.8" width="6.0" height="2.4" fill="#c586c0"/><rect x="2695.0" y="213.8" width="2.0" height="2.4" fill="#9cdcfe"/><rect x="2699.0" y="213.8" width="4.0" height="2.4" fill="#c586c0"/><rect x="2705.0" y="213.8" width="10.0" height="2.4" fill="#4ec9b0"/><rect x="2715.0" y="213.8" width="2.0" height="2.4" fill="#ffd700"/><rect x="2717.0" y="213.8" width="4.0" height="2.4" fill="#b5cea8"/><rect x="2721.0" y="213.8" width="2.0" height="2.4" fill="#ffd700"/><rect x="2723.0" y="213.8" width="2.0" height="2.4" fill="#cccccc"/><rect x="2695.0" y="217.8" width="10.0" height="2.4" fill="#dcdcaa"/><rect x="2705.0" y="217.8" width="2.0" height="2.4" fill="#ffd700"/><rect x="2707.0" y="217.8" width="12.0" height="2.4" fill="#9cdcfe"/><rect x="2719.0" y="217.8" width="2.0" height="2.4" fill="#c586c0"/><rect x="2721.0" y="217.8" width="2.0" height="2.4" fill="#9cdcfe"/><rect x="2725.0" y="217.8" width="2.0" height="2.4" fill="#cccccc"/><rect x="2729.0" y="217.8" width="6.0" height="2.4" fill="#dcdcaa"/><rect x="2735.0" y="217.8" width="2.0" height="2.4" fill="#ffd700"/><rect x="2737.0" y="217.8" width="12.0" height="2.4" fill="#9cdcfe"/><rect x="2749.0" y="217.8" width="2.0" height="2.4" fill="#ffd700"/><rect x="2751.0" y="217.8" width="2.0" height="2.4" fill="#c586c0"/><rect x="2753.0" y="217.8" width="2.0" height="2.4" fill="#ffd700"/><rect x="2695.0" y="221.8" width="12.0" height="2.4" fill="#dcdcaa"/><rect x="2707.0" y="221.8" width="2.0" height="2.4" fill="#ffd700"/><rect x="2709.0" y="221.8" width="6.0" height="2.4" fill="#b5cea8"/><rect x="2715.0" y="221.8" width="2.0" height="2.4" fill="#cccccc"/><rect x="2719.0" y="221.8" width="4.0" height="2.4" fill="#b5cea8"/><rect x="2723.0" y="221.8" width="2.0" height="2.4" fill="#ffd700"/><rect x="2695.0" y="225.8" width="8.0" height="2.4" fill="#dcdcaa"/><rect x="2703.0" y="225.8" width="2.0" height="2.4" fill="#ffd700"/><rect x="2705.0" y="225.8" width="6.0" height="2.4" fill="#b5cea8"/><rect x="2711.0" y="225.8" width="2.0" height="2.4" fill="#ffd700"/><rect x="2695.0" y="229.8" width="12.0" height="2.4" fill="#dcdcaa"/><rect x="2707.0" y="229.8" width="2.0" height="2.4" fill="#ffd700"/><rect x="2709.0" y="229.8" width="6.0" height="2.4" fill="#b5cea8"/><rect x="2715.0" y="229.8" width="2.0" height="2.4" fill="#cccccc"/><rect x="2719.0" y="229.8" width="4.0" height="2.4" fill="#b5cea8"/><rect x="2723.0" y="229.8" width="2.0" height="2.4" fill="#ffd700"/><rect x="2695.0" y="233.8" width="8.0" height="2.4" fill="#dcdcaa"/><rect x="2703.0" y="233.8" width="2.0" height="2.4" fill="#ffd700"/><rect x="2705.0" y="233.8" width="6.0" height="2.4" fill="#b5cea8"/><rect x="2711.0" y="233.8" width="2.0" height="2.4" fill="#ffd700"/><rect x="2687.0" y="241.8" width="10.0" height="2.4" fill="#dcdcaa"/><rect x="2697.0" y="241.8" width="2.0" height="2.4" fill="#ffd700"/><rect x="2699.0" y="241.8" width="22.0" height="2.4" fill="#ce9178"/><rect x="2721.0" y="241.8" width="2.0" height="2.4" fill="#ffd700"/><rect x="2687.0" y="245.8" width="10.0" height="2.4" fill="#dcdcaa"/><rect x="2697.0" y="245.8" width="2.0" height="2.4" fill="#ffd700"/><rect x="2699.0" y="245.8" width="4.0" height="2.4" fill="#b5cea8"/><rect x="2703.0" y="245.8" width="2.0" height="2.4" fill="#ffd700"/><rect x="2687.0" y="249.8" width="14.0" height="2.4" fill="#dcdcaa"/><rect x="2701.0" y="249.8" width="2.0" height="2.4" fill="#ffd700"/><rect x="2703.0" y="249.8" width="6.0" height="2.4" fill="#b5cea8"/><rect x="2709.0" y="249.8" width="2.0" height="2.4" fill="#ffd700"/><rect x="2687.0" y="257.8" width="20.0" height="2.4" fill="#dcdcaa"/><rect x="2707.0" y="257.8" width="2.0" height="2.4" fill="#ffd700"/><rect x="2709.0" y="257.8" width="2.0" height="2.4" fill="#ffd700"/><rect x="2687.0" y="261.8" width="8.0" height="2.4" fill="#dcdcaa"/><rect x="2695.0" y="261.8" width="2.0" height="2.4" fill="#ffd700"/><rect x="2697.0" y="261.8" width="2.0" height="2.4" fill="#ffd700"/></g></svg>
<div style="position:absolute;left:750px;top:223px;width:1470px;height:1437px;background:#f3f3f3;box-shadow:0 8px 44px 6px rgba(0,0,0,0.42);"></div>
<div style="position:absolute;left:750px;top:289px;width:1470px;height:1371px;background:#ffffff;"></div>
<div style="position:absolute;left:757px;top:290px;width:1455px;height:1363px;background:#000000;"></div>
<svg style="position:absolute;left:768px;top:230px;" width="30" height="42" viewBox="768 230 30 42"><path d="M790.6 236C792.4 241 790.8 248 786 255C783.6 258.4 781 260.6 778.4 261.8C776.6 257 778 250 782 243.5C784.6 239.5 787.8 237 790.6 236Z" fill="#5b9bf0" stroke="#1c2c5a" stroke-width="1.5"/><path d="M789.6 238.5C786 245.5 781 254.5 775.5 266.5" fill="none" stroke="#14204a" stroke-width="1.9"/><path d="M788 241C785 246 782.4 251 780.6 256.5" fill="none" stroke="#cfe2ff" stroke-width="1.3"/></svg>
<svg style="position:absolute;left:1976px;top:240px;" width="32" height="24" viewBox="0 0 32 24"><path d="M5.5 12.4H26" fill="none" stroke="#1a1a1a" stroke-width="2" /></svg>
<svg style="position:absolute;left:2066px;top:236px;" width="32" height="30" viewBox="0 0 32 30"><rect x="6.6" y="6.6" width="18.5" height="17.5" rx="2.5" fill="none" stroke="#1a1a1a" stroke-width="2"/></svg>
<svg style="position:absolute;left:2158px;top:236px;" width="32" height="30" viewBox="0 0 32 30"><path d="M5.5 6L26 25.5M26 6L5.5 25.5" fill="none" stroke="#1a1a1a" stroke-width="2" /></svg>
<svg style="position:absolute;left:757px;top:290px;" width="1455" height="1363" viewBox="757 290 1455 1363"><path d="M1492.0 979.3H2093" stroke="#5fd23c" stroke-width="3.4" fill="none"/><path d="M1492.0 979.3A201.0 201.0 0 0 0 1666.1 878.8A201.0 201.0 0 0 0 1492.0 979.3" fill="none" stroke="#ffd700" stroke-width="2.6"/><path d="M1492.0 979.3A201.0 201.0 0 0 0 1391.5 805.2A201.0 201.0 0 0 0 1492.0 979.3" fill="none" stroke="#ffc0cb" stroke-width="2.6"/><path d="M1492.0 979.3A201.0 201.0 0 0 0 1317.9 1079.8A201.0 201.0 0 0 0 1492.0 979.3" fill="none" stroke="#ee82ee" stroke-width="2.6"/><path d="M1492.0 979.3A201.0 201.0 0 0 0 1592.5 1153.4A201.0 201.0 0 0 0 1492.0 979.3" fill="none" stroke="#ffffff" stroke-width="2.6"/></svg>
<span class="t s" style="left:809px;top:240.7px;font-size:24px;color:#000000;transform:scaleX(0.9802);">Python Turtle Graphics</span>
</body></html>
